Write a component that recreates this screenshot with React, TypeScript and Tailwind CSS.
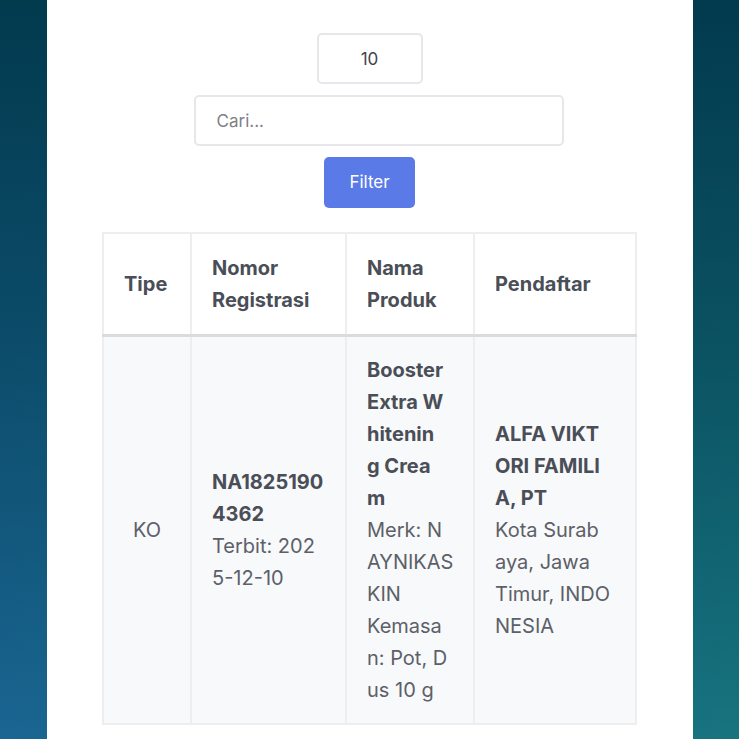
import React from 'react';

const font = { fontFamily: 'Inter, "Open Sans", sans-serif' };

function Lines({ lines, bold }: { lines: string[]; bold?: boolean }) {
  return (
    <div className={bold ? 'font-bold text-[#4a4e57]' : 'text-[#5c6068]'}>
      {lines.map((l) => (
        <div key={l} className="whitespace-nowrap">
          {l}
        </div>
      ))}
    </div>
  );
}

export default function App() {
  return (
    <div
      className="h-[739px] overflow-hidden flex justify-center bg-[linear-gradient(180deg,#023a4e_0%,rgba(2,58,78,0.6)_45%,rgba(2,58,78,0)_100%),linear-gradient(90deg,#1a6592_0%,#17747f_100%)]"
      style={font}
    >
      <div className="w-[646px] h-full bg-white flex flex-col items-center pt-[33px]">
        <input
          defaultValue="10"
          className="w-[106px] h-[51px] border-2 border-[#e6e7ea] rounded-[5px] text-center text-[17px] text-[#3f434a] outline-none"
        />
        <input
          placeholder="Cari..."
          className="mt-[11px] ml-[18px] w-[370px] h-[51px] border-2 border-[#e6e7ea] rounded-[5px] px-[21px] text-[17px] text-[#3f434a] placeholder:text-[#7d8087] outline-none"
        />
        <button className="mt-[11px] w-[91px] h-[51px] rounded-[5px] bg-[#5a7be7] text-white text-[17px]">
          Filter
        </button>

        <table className="mt-[24px] w-[533px] table-fixed border-collapse text-[20px] leading-[32px] border-2 border-[#e8e9ec]">
          <colgroup>
            <col className="w-[88px]" />
            <col className="w-[155px]" />
            <col className="w-[128px]" />
            <col className="w-[162px]" />
          </colgroup>
          <thead>
            <tr className="bg-white">
              <th className="border-2 border-[#eceef0] border-b-[3px] border-b-[#d9dbde] px-[20px] py-[18px] text-left font-bold text-[#4a4e57] align-middle">
                Tipe
              </th>
              <th className="border-2 border-[#eceef0] border-b-[3px] border-b-[#d9dbde] px-[20px] py-[18px] text-left font-bold text-[#4a4e57] align-middle">
                <div className="whitespace-nowrap">Nomor</div>
                <div className="whitespace-nowrap">Registrasi</div>
              </th>
              <th className="border-2 border-[#eceef0] border-b-[3px] border-b-[#d9dbde] px-[20px] py-[18px] text-left font-bold text-[#4a4e57] align-middle">
                <div className="whitespace-nowrap">Nama</div>
                <div className="whitespace-nowrap">Produk</div>
              </th>
              <th className="border-2 border-[#eceef0] border-b-[3px] border-b-[#d9dbde] px-[20px] py-[18px] text-left font-bold text-[#4a4e57] align-middle">
                Pendaftar
              </th>
            </tr>
          </thead>
          <tbody>
            <tr className="bg-[#f8f9fb]">
              <td className="border-2 border-[#eceef0] px-[20px] py-[17px] text-center text-[#5c6068] align-middle">
                KO
              </td>
              <td className="border-2 border-[#eceef0] px-[20px] py-[17px] align-middle">
                <Lines bold lines={['NA1825190', '4362']} />
                <Lines lines={['Terbit: 202', '5-12-10']} />
              </td>
              <td className="border-2 border-[#eceef0] px-[20px] py-[17px] align-middle">
                <Lines bold lines={['Booster', 'Extra W', 'hitenin', 'g Crea', 'm']} />
                <Lines lines={['Merk: N', 'AYNIKAS', 'KIN', 'Kemasa', 'n: Pot, D', 'us 10 g']} />
              </td>
              <td className="border-2 border-[#eceef0] px-[20px] py-[17px] align-middle">
                <Lines bold lines={['ALFA VIKT', 'ORI FAMILI', 'A, PT']} />
                <Lines lines={['Kota Surab', 'aya, Jawa', 'Timur, INDO', 'NESIA']} />
              </td>
            </tr>
          </tbody>
        </table>
      </div>
    </div>
  );
}
